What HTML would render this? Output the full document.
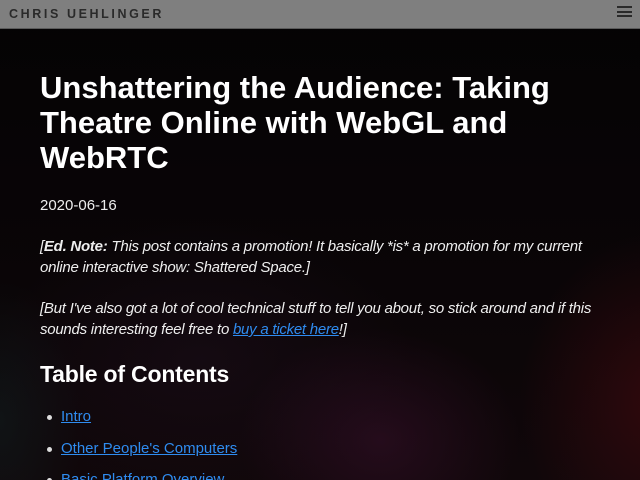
<!DOCTYPE html>
<html><head><meta charset="utf-8"><style>
html,body{margin:0;padding:0;width:640px;height:480px;overflow:hidden;background:#050405;}
body{font-family:"Liberation Sans",sans-serif;color:#eee;position:relative;
background:
radial-gradient(ellipse 200px 160px at 380px 440px, rgba(70,20,55,0.4), transparent 70%),
radial-gradient(ellipse 200px 240px at 660px 400px, rgba(90,12,18,0.45), transparent 70%),
radial-gradient(ellipse 300px 200px at 200px 360px, rgba(40,20,40,0.3), transparent 70%),
radial-gradient(ellipse 120px 200px at 0px 420px, rgba(20,50,50,0.3), transparent 70%),
linear-gradient(#040304,#0a0507 60%,#10070a);}
.hdr{position:absolute;left:0;top:0;width:640px;height:28px;background:#7f7f7f;border-bottom:1px solid #5a5a5a;}
.logo{position:absolute;left:9px;top:7px;font-size:12.5px;letter-spacing:2.6px;color:#2a2a2a;font-weight:bold;}
.ham{position:absolute;left:617px;width:15px;height:2px;background:#2a2a2a;}
.c{position:absolute;left:40px;width:570px;}
h1{margin:0;font-size:31px;letter-spacing:0;line-height:35px;font-weight:bold;color:#fff;top:70px;}
p{margin:0;font-size:15px;line-height:21px;}
.it{font-style:italic;letter-spacing:-0.25px;}
a{color:#2f8cf0;text-decoration:underline;}
h2{margin:0;font-size:23px;font-weight:bold;color:#fff;letter-spacing:-0.2px;}
li{font-size:15px;position:absolute;left:21px;}
li:before{content:"";position:absolute;left:-14px;top:7px;width:5px;height:5px;border-radius:50%;background:#ddd;}
</style></head><body>
<div class="hdr"><div class="logo">CHRIS UEHLINGER</div>
<div class="ham" style="top:6px"></div><div class="ham" style="top:11px"></div><div class="ham" style="top:15px"></div></div>
<h1 class="c">Unshattering the Audience: Taking Theatre Online with WebGL and WebRTC</h1>
<p class="c" style="top:195px">2020-06-16</p>
<p class="c it" style="top:236px">[<b>Ed. Note:</b> This post contains a promotion! It basically *is* a promotion for my current online interactive show: Shattered Space.]</p>
<p class="c it" style="top:298px">[But I've also got a lot of cool technical stuff to tell you about, so stick around and if this sounds interesting feel free to <a>buy a ticket here</a>!]</p>
<h2 class="c" style="top:361px">Table of Contents</h2>
<ul class="c" style="top:0;margin:0;padding:0;list-style:none">
<li style="top:408px"><a>Intro</a></li>
<li style="top:440px"><a>Other People's Computers</a></li>
<li style="top:471px"><a>Basic Platform Overview</a></li>
</ul>
</body></html>
